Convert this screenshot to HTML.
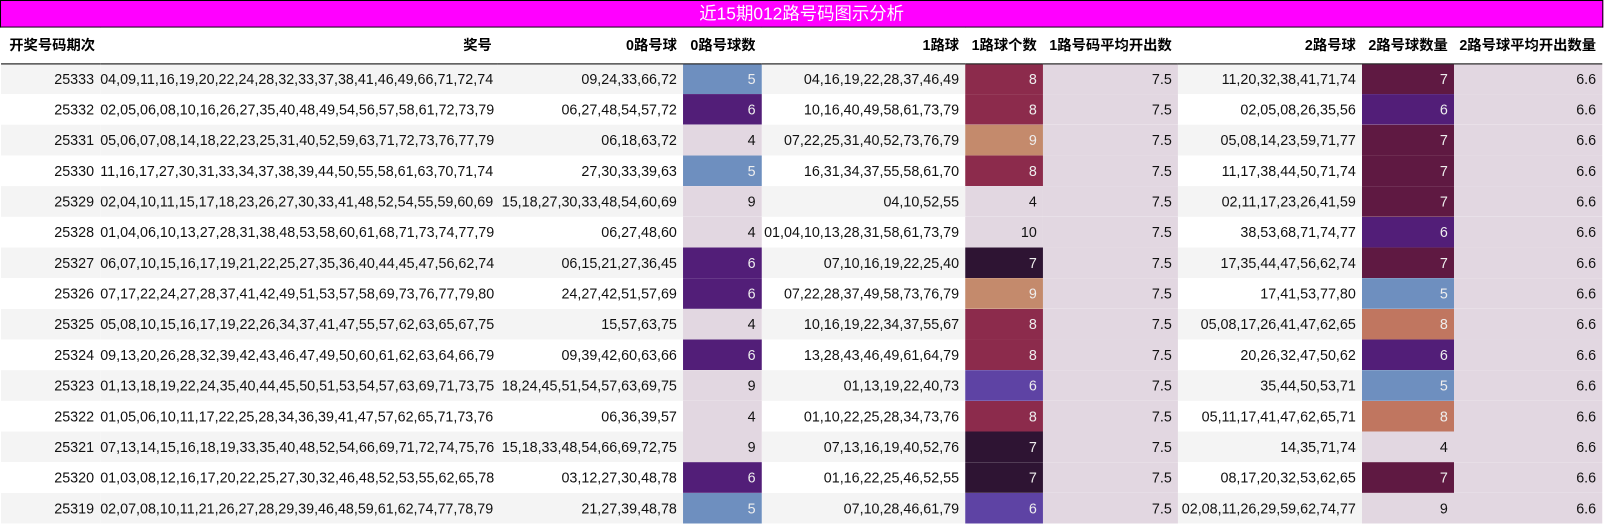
<!DOCTYPE html>
<html><head><meta charset="utf-8"><style>
html,body{margin:0;padding:0;overflow:hidden;background:#fff;font-family:"Liberation Sans","Noto Sans CJK SC",sans-serif;}
.w{position:absolute;left:0;top:0;width:1604px;height:515px;background:#fff;transform:scale(1.0225);transform-origin:0 0;}
.t{position:absolute;left:0;top:0;width:1566px;height:25px;background:#ff00ff;border:1px solid #000;color:#fff;text-align:center;font-size:17px;line-height:25px;}
table{position:absolute;left:1px;top:27px;border-collapse:collapse;table-layout:fixed;width:1566px;font-size:14px;}
th{height:35px;box-sizing:border-box;text-align:right;padding:0 6px 0 0;font-weight:bold;font-size:14px;border-bottom:1.5px solid #000;white-space:nowrap;overflow:hidden;background:#fff;}
td{height:30px;box-sizing:border-box;padding:0 6px 0 0;text-align:right;white-space:nowrap;color:#111;overflow:hidden;}
tr:nth-child(even) td{background:#f4f4f4}
tr:nth-child(odd) td{background:#fff}
th:first-child{text-align:left;padding-left:8px}
td.l{background:#e2d7e1!important;color:#111}
td.a{background:#6e8fbf!important;color:#eee}
td.p{background:#521e78!important;color:#eee}
td.r{background:#8c2b4c!important;color:#eee}
td.o{background:#c48a6c!important;color:#eee}
td.d{background:#2e1433!important;color:#eee}
td.v{background:#5e43a4!important;color:#eee}
td.m{background:#5f1942!important;color:#eee}
td.s{background:#c07660!important;color:#eee}
</style></head><body>
<div class="w">
<div class="t">近15期012路号码图示分析</div>
<table>
<colgroup><col style="width:97px"><col style="width:389px"><col style="width:181px"><col style="width:77px"><col style="width:199px"><col style="width:76px"><col style="width:132px"><col style="width:180px"><col style="width:90px"><col style="width:145px"></colgroup>
<tr><th>开奖号码期次</th><th>奖号</th><th>0路号球</th><th>0路号球数</th><th>1路球</th><th>1路球个数</th><th>1路号码平均开出数</th><th>2路号球</th><th>2路号球数量</th><th>2路号球平均开出数量</th></tr>
<tr><td>25333</td><td>04,09,11,16,19,20,22,24,28,32,33,37,38,41,46,49,66,71,72,74</td><td>09,24,33,66,72</td><td class="a">5</td><td>04,16,19,22,28,37,46,49</td><td class="r">8</td><td class="l">7.5</td><td>11,20,32,38,41,71,74</td><td class="m">7</td><td class="l">6.6</td></tr>
<tr><td>25332</td><td>02,05,06,08,10,16,26,27,35,40,48,49,54,56,57,58,61,72,73,79</td><td>06,27,48,54,57,72</td><td class="p">6</td><td>10,16,40,49,58,61,73,79</td><td class="r">8</td><td class="l">7.5</td><td>02,05,08,26,35,56</td><td class="p">6</td><td class="l">6.6</td></tr>
<tr><td>25331</td><td>05,06,07,08,14,18,22,23,25,31,40,52,59,63,71,72,73,76,77,79</td><td>06,18,63,72</td><td class="l">4</td><td>07,22,25,31,40,52,73,76,79</td><td class="o">9</td><td class="l">7.5</td><td>05,08,14,23,59,71,77</td><td class="m">7</td><td class="l">6.6</td></tr>
<tr><td>25330</td><td>11,16,17,27,30,31,33,34,37,38,39,44,50,55,58,61,63,70,71,74</td><td>27,30,33,39,63</td><td class="a">5</td><td>16,31,34,37,55,58,61,70</td><td class="r">8</td><td class="l">7.5</td><td>11,17,38,44,50,71,74</td><td class="m">7</td><td class="l">6.6</td></tr>
<tr><td>25329</td><td>02,04,10,11,15,17,18,23,26,27,30,33,41,48,52,54,55,59,60,69</td><td>15,18,27,30,33,48,54,60,69</td><td class="l">9</td><td>04,10,52,55</td><td class="l">4</td><td class="l">7.5</td><td>02,11,17,23,26,41,59</td><td class="m">7</td><td class="l">6.6</td></tr>
<tr><td>25328</td><td>01,04,06,10,13,27,28,31,38,48,53,58,60,61,68,71,73,74,77,79</td><td>06,27,48,60</td><td class="l">4</td><td>01,04,10,13,28,31,58,61,73,79</td><td class="l">10</td><td class="l">7.5</td><td>38,53,68,71,74,77</td><td class="p">6</td><td class="l">6.6</td></tr>
<tr><td>25327</td><td>06,07,10,15,16,17,19,21,22,25,27,35,36,40,44,45,47,56,62,74</td><td>06,15,21,27,36,45</td><td class="p">6</td><td>07,10,16,19,22,25,40</td><td class="d">7</td><td class="l">7.5</td><td>17,35,44,47,56,62,74</td><td class="m">7</td><td class="l">6.6</td></tr>
<tr><td>25326</td><td>07,17,22,24,27,28,37,41,42,49,51,53,57,58,69,73,76,77,79,80</td><td>24,27,42,51,57,69</td><td class="p">6</td><td>07,22,28,37,49,58,73,76,79</td><td class="o">9</td><td class="l">7.5</td><td>17,41,53,77,80</td><td class="a">5</td><td class="l">6.6</td></tr>
<tr><td>25325</td><td>05,08,10,15,16,17,19,22,26,34,37,41,47,55,57,62,63,65,67,75</td><td>15,57,63,75</td><td class="l">4</td><td>10,16,19,22,34,37,55,67</td><td class="r">8</td><td class="l">7.5</td><td>05,08,17,26,41,47,62,65</td><td class="s">8</td><td class="l">6.6</td></tr>
<tr><td>25324</td><td>09,13,20,26,28,32,39,42,43,46,47,49,50,60,61,62,63,64,66,79</td><td>09,39,42,60,63,66</td><td class="p">6</td><td>13,28,43,46,49,61,64,79</td><td class="r">8</td><td class="l">7.5</td><td>20,26,32,47,50,62</td><td class="p">6</td><td class="l">6.6</td></tr>
<tr><td>25323</td><td>01,13,18,19,22,24,35,40,44,45,50,51,53,54,57,63,69,71,73,75</td><td>18,24,45,51,54,57,63,69,75</td><td class="l">9</td><td>01,13,19,22,40,73</td><td class="v">6</td><td class="l">7.5</td><td>35,44,50,53,71</td><td class="a">5</td><td class="l">6.6</td></tr>
<tr><td>25322</td><td>01,05,06,10,11,17,22,25,28,34,36,39,41,47,57,62,65,71,73,76</td><td>06,36,39,57</td><td class="l">4</td><td>01,10,22,25,28,34,73,76</td><td class="r">8</td><td class="l">7.5</td><td>05,11,17,41,47,62,65,71</td><td class="s">8</td><td class="l">6.6</td></tr>
<tr><td>25321</td><td>07,13,14,15,16,18,19,33,35,40,48,52,54,66,69,71,72,74,75,76</td><td>15,18,33,48,54,66,69,72,75</td><td class="l">9</td><td>07,13,16,19,40,52,76</td><td class="d">7</td><td class="l">7.5</td><td>14,35,71,74</td><td class="l">4</td><td class="l">6.6</td></tr>
<tr><td>25320</td><td>01,03,08,12,16,17,20,22,25,27,30,32,46,48,52,53,55,62,65,78</td><td>03,12,27,30,48,78</td><td class="p">6</td><td>01,16,22,25,46,52,55</td><td class="d">7</td><td class="l">7.5</td><td>08,17,20,32,53,62,65</td><td class="m">7</td><td class="l">6.6</td></tr>
<tr><td>25319</td><td>02,07,08,10,11,21,26,27,28,29,39,46,48,59,61,62,74,77,78,79</td><td>21,27,39,48,78</td><td class="a">5</td><td>07,10,28,46,61,79</td><td class="v">6</td><td class="l">7.5</td><td>02,08,11,26,29,59,62,74,77</td><td class="l">9</td><td class="l">6.6</td></tr>
</table>
</div>
</body></html>
